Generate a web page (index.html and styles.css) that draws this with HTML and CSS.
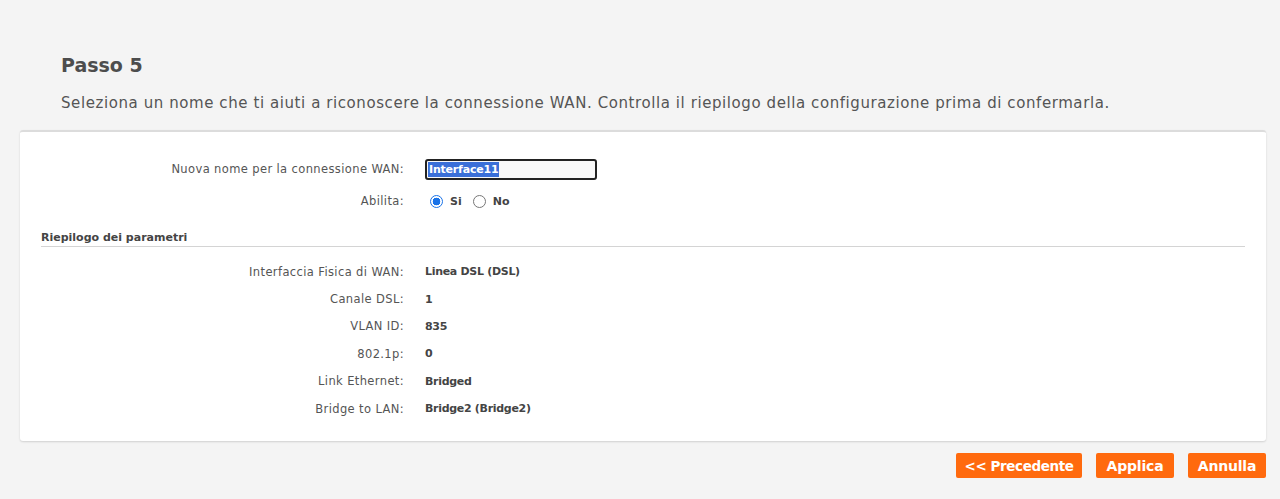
FILE: index.html
```html
<!DOCTYPE html>
<html lang="it">
<head>
<meta charset="utf-8">
<title>Passo 5</title>
<link rel="stylesheet" href="styles.css">
</head>
<body>
<div class="page">
  <div class="intro">
    <h1 class="title">Passo 5</h1>
    <p class="desc">Seleziona un nome che ti aiuti a riconoscere la connessione WAN. Controlla il riepilogo della configurazione prima di confermarla.</p>
  </div>
  <div class="card">
    <div class="form">
      <div class="row row-input">
        <div class="label">Nuova nome per la connessione WAN:</div>
        <div class="value"><div class="text-input"><span class="sel">Interface11</span></div></div>
      </div>
      <div class="row row-radio">
        <div class="label">Abilita:</div>
        <div class="value radios">
          <span class="radio checked"></span><span class="opt">Si</span>
          <span class="radio"></span><span class="opt">No</span>
        </div>
      </div>
    </div>
    <div class="section">Riepilogo dei parametri</div>
    <div class="summary">
      <div class="row srow"><div class="label">Interfaccia Fisica di WAN:</div><div class="value bold">Linea DSL (DSL)</div></div>
      <div class="row srow"><div class="label">Canale DSL:</div><div class="value bold">1</div></div>
      <div class="row srow"><div class="label">VLAN ID:</div><div class="value bold">835</div></div>
      <div class="row srow"><div class="label">802.1p:</div><div class="value bold">0</div></div>
      <div class="row srow"><div class="label">Link Ethernet:</div><div class="value bold">Bridged</div></div>
      <div class="row srow"><div class="label">Bridge to LAN:</div><div class="value bold">Bridge2 (Bridge2)</div></div>
    </div>
  </div>
  <div class="actions">
    <button class="btn btn-prev">&lt;&lt; Precedente</button>
    <button class="btn">Applica</button>
    <button class="btn">Annulla</button>
  </div>
</div>
</body>
</html>
```
FILE: styles.css
```css
html, body {
  margin: 0;
  padding: 0;
  background: #f4f4f4;
  font-family: "DejaVu Sans", "Noto Sans", sans-serif;
  color: #555;
}
.page {
  width: 1280px;
  height: 499px;
  overflow: hidden;
}
.intro {
  padding: 52px 0 17px 61px;
}
.title {
  margin: 0;
  font-size: 19px;
  line-height: 26px;
  font-weight: bold;
  color: #4d4d4d;
}
.desc {
  margin: 15px 0 0 0;
  font-size: 15px;
  line-height: 20px;
  color: #555;
  letter-spacing: 0.58px;
}
.card {
  margin: 0 14px 0 20px;
  height: 311px;
  box-sizing: border-box;
  background: #fff;
  border-top: 2px solid #dcdcdc;
  box-shadow: 0 1px 2px rgba(0,0,0,0.15);
  border-radius: 3px;
  padding-top: 26px;
}
.row {
  display: grid;
  grid-template-columns: 384px 1fr;
  column-gap: 21px;
  align-items: center;
}
.label {
  text-align: right;
  font-size: 11.5px;
  letter-spacing: 0.38px;
  color: #555;
}
.value {
  font-size: 11px;
  color: #444;
}
.bold {
  font-weight: bold;
  letter-spacing: -0.3px;
}
.row-input {
  height: 22px;
}
.text-input {
  width: 172px;
  height: 21px;
  box-sizing: border-box;
  border: 2px solid #222;
  border-radius: 3px;
  background: #f8f8f8;
  display: flex;
  align-items: center;
  padding-left: 1px;
}
.sel {
  background: #3a6fd8;
  color: #fff;
  font-weight: bold;
  font-size: 11px;
  letter-spacing: -0.2px;
  line-height: 15px;
  padding: 0 1px;
}
.row-radio {
  height: 22px;
  margin-top: 10px;
}
.radios {
  display: flex;
  align-items: center;
  font-weight: bold;
}
.radio {
  width: 13px;
  height: 13px;
  box-sizing: border-box;
  border: 1px solid #777;
  border-radius: 50%;
  margin: 0 7px 0 5px;
  display: inline-block;
}
.radio.checked {
  border: 1px solid #1a73e8;
  background: radial-gradient(circle, #1a73e8 0 3.6px, #fff 4.1px);
}
.opt {
  margin-right: 6px;
}
.section {
  margin: 18px 21px 0 21px;
  font-size: 11px;
  font-weight: bold;
  color: #444;
  border-bottom: 1.5px solid #d4d4d4;
  line-height: 16px;
}
.summary {
  margin-top: 11px;
}
.srow {
  height: 27.4px;
}
.actions {
  display: flex;
  justify-content: flex-end;
  gap: 14px;
  margin: 12px 14px 0 0;
}
.btn {
  width: 78px;
  height: 25px;
  border: none;
  border-radius: 2px;
  background: #ff6a0e;
  color: #fff;
  font-family: "DejaVu Sans", sans-serif;
  font-weight: bold;
  font-size: 14px;
  letter-spacing: -0.2px;
  padding: 0;
  text-align: center;
  cursor: pointer;
}
.btn-prev {
  width: 126px;
  font-size: 13.5px;
  letter-spacing: -0.4px;
}
```
